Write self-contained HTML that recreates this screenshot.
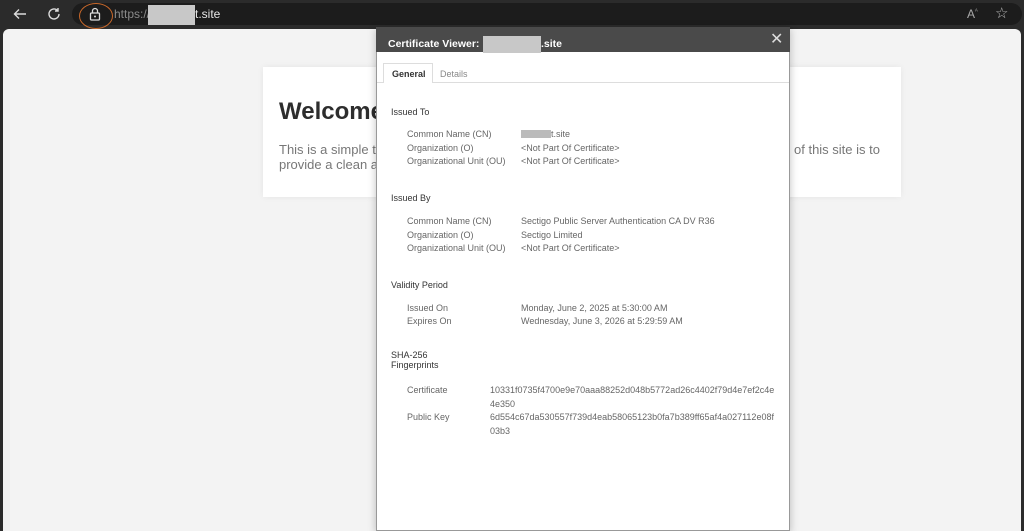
<!DOCTYPE html>
<html><head><style>
*{margin:0;padding:0;box-sizing:border-box}
body{width:1024px;height:531px;overflow:hidden;background:#2b2b2b;font-family:"Liberation Sans",sans-serif;position:relative}
.a{position:absolute;white-space:nowrap}
.t{font-size:9px;color:#666;line-height:12px}
.h{font-size:9px;color:#333;line-height:12px}
</style></head><body>
<div class="a" style="left:0;top:0;width:1024px;height:29px;background:#2b2b2b"></div>
<div class="a" style="left:72px;top:3px;width:950px;height:22px;background:#1c1c1c;border-radius:11px"></div>
<svg class="a" style="left:12px;top:6px" width="16" height="16" viewBox="0 0 16 16"><path d="M14 8H3M7 3.5L2.5 8 7 12.5" stroke="#ddd" stroke-width="1.4" fill="none"/></svg>
<svg class="a" style="left:46px;top:6px" width="16" height="16" viewBox="0 0 16 16"><path d="M13 8a5 5 0 1 1-1.6-3.7M12 2v3h-3" stroke="#ddd" stroke-width="1.4" fill="none"/></svg>
<div class="a" style="left:79px;top:3px;width:34px;height:26px;border:1.5px solid #c9682a;border-radius:50%"></div>
<svg class="a" style="left:88px;top:7px" width="14" height="14" viewBox="0 0 14 14"><rect x="2.5" y="6" width="9" height="7" rx="1" stroke="#ddd" stroke-width="1.3" fill="none"/><path d="M4.5 6V4a2.5 2.5 0 0 1 5 0v2" stroke="#ddd" stroke-width="1.3" fill="none"/><circle cx="7" cy="9.5" r="1" fill="#ddd"/></svg>
<div class="a" style="left:114px;top:7px;font-size:12px;color:#8a8a8a">https://</div>
<div class="a" style="left:148px;top:5px;width:47px;height:20px;background:#c8c8c8"></div>
<div class="a" style="left:195px;top:7px;font-size:12px;color:#e6e6e6">t.site</div>
<div class="a" style="left:967px;top:7px;font-size:12px;color:#aaa">A<sup style="font-size:6px">ᴬ</sup></div>
<div class="a" style="left:995px;top:4px;font-size:15px;color:#bbb">☆</div>
<div class="a" style="left:3px;top:29px;width:1018px;height:502px;background:#f3f3f3;border-radius:6px 6px 0 0"></div>
<div class="a" style="left:263px;top:67px;width:638px;height:130px;background:#fff;box-shadow:0 0 6px rgba(0,0,0,.06)"></div>
<div class="a" style="left:279px;top:98px;font-size:24px;font-weight:bold;color:#2d2d2d">Welcome</div>
<div class="a" style="left:279px;top:142px;font-size:13px;color:#777;line-height:15px">This is a simple te<br>provide a clean ar</div>
<div class="a" style="left:794px;top:142px;font-size:13px;color:#777">of this site is to</div>
<div class="a" style="left:376px;top:27px;width:414px;height:504px;background:#fff;border:1px solid #999;box-shadow:0 2px 8px rgba(0,0,0,.25)"></div>
<div class="a" style="left:376px;top:27px;width:414px;height:25px;background:#4a4a4a"></div>
<div class="a" style="left:388px;top:38px;font-size:10.5px;font-weight:bold;color:#fff">Certificate Viewer:</div>
<div class="a" style="left:483px;top:36px;width:58px;height:17px;background:#c8c8c8"></div>
<div class="a" style="left:541px;top:38px;font-size:10.5px;font-weight:bold;color:#fff">.site</div>
<div class="a" style="left:770px;top:29px;font-size:16px;color:#ddd">✕</div>
<div class="a" style="left:377px;top:82px;width:412px;height:1px;background:#ddd"></div>
<div class="a" style="left:383px;top:63px;width:50px;height:20px;background:#fff;border:1px solid #ddd;border-bottom:none"></div>
<div class="a h" style="left:392px;top:68px;font-weight:bold">General</div>
<div class="a t" style="left:440px;top:68px;color:#888">Details</div>
<div class="a h" style="left:391px;top:106px">Issued To</div>
<div class="a t" style="left:407px;top:128px">Common Name (CN)</div>
<div class="a" style="left:521px;top:130px;width:30px;height:8px;background:#bbb"></div>
<div class="a t" style="left:551px;top:128px">t.site</div>
<div class="a t" style="left:407px;top:142px">Organization (O)</div><div class="a t" style="left:521px;top:142px">&lt;Not Part Of Certificate&gt;</div>
<div class="a t" style="left:407px;top:155px">Organizational Unit (OU)</div><div class="a t" style="left:521px;top:155px">&lt;Not Part Of Certificate&gt;</div>
<div class="a h" style="left:391px;top:192px">Issued By</div>
<div class="a t" style="left:407px;top:215px">Common Name (CN)</div><div class="a t" style="left:521px;top:215px">Sectigo Public Server Authentication CA DV R36</div>
<div class="a t" style="left:407px;top:229px">Organization (O)</div><div class="a t" style="left:521px;top:229px">Sectigo Limited</div>
<div class="a t" style="left:407px;top:242px">Organizational Unit (OU)</div><div class="a t" style="left:521px;top:242px">&lt;Not Part Of Certificate&gt;</div>
<div class="a h" style="left:391px;top:279px">Validity Period</div>
<div class="a t" style="left:407px;top:302px">Issued On</div><div class="a t" style="left:521px;top:302px">Monday, June 2, 2025 at 5:30:00 AM</div>
<div class="a t" style="left:407px;top:315px">Expires On</div><div class="a t" style="left:521px;top:315px">Wednesday, June 3, 2026 at 5:29:59 AM</div>
<div class="a h" style="left:391px;top:350px;line-height:10px">SHA-256<br>Fingerprints</div>
<div class="a t" style="left:407px;top:384px">Certificate</div>
<div class="a t" style="left:490px;top:384px;line-height:13.5px">10331f0735f4700e9e70aaa88252d048b5772ad26c4402f79d4e7ef2c4e<br>4e350</div>
<div class="a t" style="left:407px;top:411px">Public Key</div>
<div class="a t" style="left:490px;top:411px;line-height:13.5px">6d554c67da530557f739d4eab58065123b0fa7b389ff65af4a027112e08f<br>03b3</div>
</body></html>
